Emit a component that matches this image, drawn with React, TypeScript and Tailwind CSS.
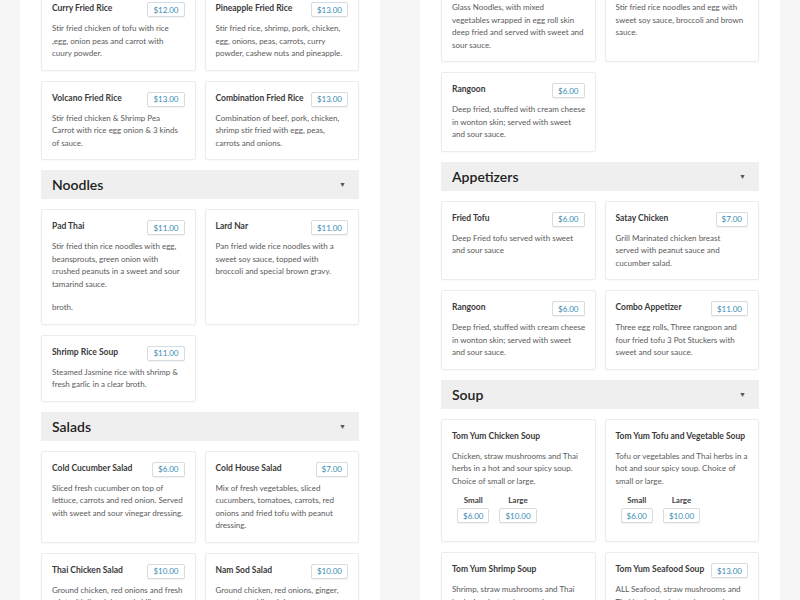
type Card = {
  title: string;
  price?: string;
  lines: string[];
  extra?: string;
  sizes?: { label: string; price: string }[];
};

type Block = { header: string } | { cards: Card[] };

const soupSizes = [
  { label: 'Small', price: '$6.00' },
  { label: 'Large', price: '$10.00' },
];

const leftColumn: Block[] = [
  {
    cards: [
      {
        title: 'Curry Fried Rice',
        price: '$12.00',
        lines: ['Stir fried chicken of tofu with rice', ',egg, onion peas and carrot with', 'cuury powder.'],
      },
      {
        title: 'Pineapple Fried Rice',
        price: '$13.00',
        lines: ['Stir fried rice, shrimp, pork, chicken,', 'egg, onions, peas, carrots, curry', 'powder, cashew nuts and pineapple.'],
      },
    ],
  },
  {
    cards: [
      {
        title: 'Volcano Fried Rice',
        price: '$13.00',
        lines: ['Stir fried chicken & Shrimp Pea', 'Carrot with rice egg onion & 3 kinds', 'of sauce.'],
      },
      {
        title: 'Combination Fried Rice',
        price: '$13.00',
        lines: ['Combination of beef, pork, chicken,', 'shrimp stir fried with egg, peas,', 'carrots and onions.'],
      },
    ],
  },
  { header: 'Noodles' },
  {
    cards: [
      {
        title: 'Pad Thai',
        price: '$11.00',
        lines: ['Stir fried thin rice noodles with egg,', 'beansprouts, green onion with', 'crushed peanuts in a sweet and sour', 'tamarind sauce.'],
        extra: 'broth.',
      },
      {
        title: 'Lard Nar',
        price: '$11.00',
        lines: ['Pan fried wide rice noodles with a', 'sweet soy sauce, topped with', 'broccoli and special brown gravy.'],
      },
    ],
  },
  {
    cards: [
      {
        title: 'Shrimp Rice Soup',
        price: '$11.00',
        lines: ['Steamed Jasmine rice with shrimp &', 'fresh garlic in a clear broth.'],
      },
    ],
  },
  { header: 'Salads' },
  {
    cards: [
      {
        title: 'Cold Cucumber Salad',
        price: '$6.00',
        lines: ['Sliced fresh cucumber on top of', 'lettuce, carrots and red onion. Served', 'with sweet and sour vinegar dressing.'],
      },
      {
        title: 'Cold House Salad',
        price: '$7.00',
        lines: ['Mix of fresh vegetables, sliced', 'cucumbers, tomatoes, carrots, red', 'onions and fried tofu with peanut', 'dressing.'],
      },
    ],
  },
  {
    cards: [
      {
        title: 'Thai Chicken Salad',
        price: '$10.00',
        lines: ['Ground chicken, red onions and fresh', 'mint with lime juice and chili.'],
      },
      {
        title: 'Nam Sod Salad',
        price: '$10.00',
        lines: ['Ground chicken, red onions, ginger,', 'peanuts and lime juice.'],
      },
    ],
  },
];

const rightColumn: Block[] = [
  {
    cards: [
      {
        title: 'Egg Rolls',
        price: '$6.00',
        lines: ['Glass Noodles, with mixed', 'vegetables wrapped in egg roll skin', 'deep fried and served with sweet and', 'sour sauce.'],
      },
      {
        title: 'Pad See Ew',
        price: '$11.00',
        lines: ['Stir fried rice noodles and egg with', 'sweet soy sauce, broccoli and brown', 'sauce.'],
      },
    ],
  },
  {
    cards: [
      {
        title: 'Rangoon',
        price: '$6.00',
        lines: ['Deep fried, stuffed with cream cheese', 'in wonton skin; served with sweet', 'and sour sauce.'],
      },
    ],
  },
  { header: 'Appetizers' },
  {
    cards: [
      {
        title: 'Fried Tofu',
        price: '$6.00',
        lines: ['Deep Fried tofu served with sweet', 'and sour sauce'],
      },
      {
        title: 'Satay Chicken',
        price: '$7.00',
        lines: ['Grill Marinated chicken breast', 'served with peanut sauce and', 'cucumber salad.'],
      },
    ],
  },
  {
    cards: [
      {
        title: 'Rangoon',
        price: '$6.00',
        lines: ['Deep fried, stuffed with cream cheese', 'in wonton skin; served with sweet', 'and sour sauce.'],
      },
      {
        title: 'Combo Appetizer',
        price: '$11.00',
        lines: ['Three egg rolls, Three rangoon and', 'four fried tofu 3 Pot Stuckers with', 'sweet and sour sauce.'],
      },
    ],
  },
  { header: 'Soup' },
  {
    cards: [
      {
        title: 'Tom Yum Chicken Soup',
        lines: ['Chicken, straw mushrooms and Thai', 'herbs in a hot and sour spicy soup.', 'Choice of small or large.'],
        sizes: soupSizes,
      },
      {
        title: 'Tom Yum Tofu and Vegetable Soup',
        lines: ['Tofu or vegetables and Thai herbs in a', 'hot and sour spicy soup. Choice of', 'small or large.'],
        sizes: soupSizes,
      },
    ],
  },
  {
    cards: [
      {
        title: 'Tom Yum Shrimp Soup',
        lines: ['Shrimp, straw mushrooms and Thai', 'herbs in a hot and sour spicy soup.', 'Choice of small or large.'],
        sizes: [
          { label: 'Small', price: '$7.00' },
          { label: 'Large', price: '$11.00' },
        ],
      },
      {
        title: 'Tom Yum Seafood Soup',
        price: '$13.00',
        lines: ['ALL Seafood, straw mushrooms and', 'Thai herbs in a hot and sour spicy soup.'],
      },
    ],
  },
];

function PriceTag({ price }: { price: string }) {
  return (
    <span className="inline-flex h-[15px] items-center rounded-[2px] border border-[#d3dde3] bg-white px-[5px] text-[8px] leading-none text-[#3a8bb3] shadow-[0_1px_1px_rgba(0,0,0,0.06)]">
      {price}
    </span>
  );
}

function MenuCard({ card }: { card: Card }) {
  return (
    <div className="rounded-[2px] border border-[#ececec] bg-white px-[10px] pb-[10px] pt-[10px] shadow-[0_1px_2px_rgba(0,0,0,0.03)]">
      <div className="flex h-[15px] items-start justify-between">
        <h3 className="mt-[1px] whitespace-nowrap text-[8.5px] font-bold leading-[11px] text-[#3a3a3a]">
          {card.title}
        </h3>
        {card.price && <PriceTag price={card.price} />}
      </div>
      <p className="mt-[5px] whitespace-nowrap text-[8px] leading-[12.5px] text-[#5a5a5a]">
        {card.lines.map((line, i) => (
          <span key={i} className="block">
            {line}
          </span>
        ))}
      </p>
      {card.extra && <p className="mt-[11px] text-[8px] leading-[12.5px] text-[#5a5a5a]">{card.extra}</p>}
      {card.sizes && (
        <div className="mb-[8px] ml-[5px] mt-[7px] flex gap-[10px]">
          {card.sizes.map((s) => (
            <div key={s.label} className="flex flex-col items-center gap-[2px]">
              <span className="text-[8px] font-bold leading-[12px] text-[#444]">{s.label}</span>
              <PriceTag price={s.price} />
            </div>
          ))}
        </div>
      )}
    </div>
  );
}

function SectionHeader({ title }: { title: string }) {
  return (
    <div className="flex h-[29px] items-center justify-between bg-[#efefef] px-[11px]">
      <h2 className="text-[14px] font-semibold text-[#222]">{title}</h2>
      <span className="mr-[2px] text-[7px] text-[#555]">▼</span>
    </div>
  );
}

function Column({ blocks, offset }: { blocks: Block[]; offset: string }) {
  return (
    <div className="h-[600px] w-[360px] overflow-hidden bg-white px-[21px]">
      <div className={`flex flex-col gap-[10px] ${offset}`}>
        {blocks.map((b, i) =>
          'header' in b ? (
            <SectionHeader key={i} title={b.header} />
          ) : (
            <div key={i} className="grid grid-cols-2 gap-[9px]">
              {b.cards.map((c) => (
                <MenuCard key={c.title + i} card={c} />
              ))}
            </div>
          )
        )}
      </div>
    </div>
  );
}

export default function App() {
  return (
    <div
      className="flex h-[600px] w-[800px] gap-[40px] overflow-hidden bg-[#f6f6f6] px-[20px]"
      style={{ fontFamily: 'Lato, "Open Sans", sans-serif' }}
    >
      <Column blocks={leftColumn} offset="-mt-[9px]" />
      <Column blocks={rightColumn} offset="-mt-[30px]" />
    </div>
  );
}
